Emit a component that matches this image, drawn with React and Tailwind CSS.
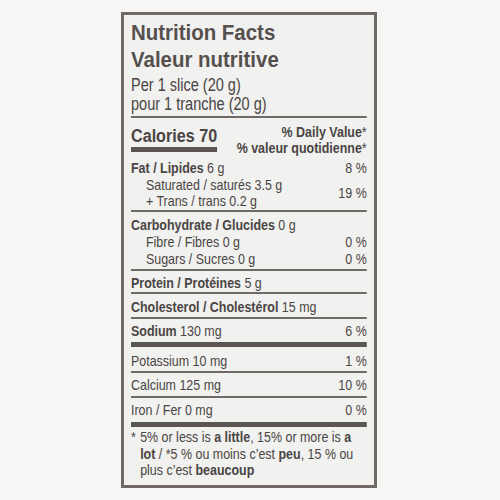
import React from "react";

function Rule({ mt = "mt-[2px]" }) {
  return <div className={`${mt} h-[2px] bg-[#6f6a68]`} />;
}

export default function App() {
  return (
    <div className="w-[500px] h-[500px] bg-[#f6f6f5] pt-[12px] pl-[121px] font-['Liberation_Sans',Arial,sans-serif] text-[#4a4544]">
      <div className="w-[256px] border-[3px] border-[#6f6a68] bg-[#f1f1ef] px-[7px] pb-[6px]">
        <div className="w-[284px] origin-left scale-x-[0.83] whitespace-nowrap">
          <div className="pt-[4px] origin-left scale-x-[1.12] text-[22px] leading-[27px] font-bold text-[#55504e]">
            <div>Nutrition Facts</div>
            <div>Valeur nutritive</div>
          </div>
          <div className="mt-[3px] text-[17.5px] leading-[19px]">
            <div>Per 1 slice (20 g)</div>
            <div>pour 1 tranche (20 g)</div>
          </div>
          <Rule mt="mt-[2px]" />

          <div className="flex justify-between items-start">
            <div className="mt-[7px] flex flex-col origin-left scale-x-[1.08]">
              <div className="text-[18px] leading-[22px] font-bold">Calories 70</div>
              <div className="h-[5px] bg-[#5b5553]" />
            </div>
            <div className="mt-[6px] text-right text-[15px] leading-[16px] font-bold">
              <div>% Daily Value<span className="font-normal">*</span></div>
              <div>% valeur quotidienne<span className="font-normal">*</span></div>
            </div>
          </div>

          <div className="mt-[3px] flex justify-between text-[15px] leading-[17px]">
            <div><span className="font-bold">Fat / Lipides</span> 6 g</div>
            <div>8 %</div>
          </div>
          <div className="mt-[1px] flex justify-between items-center text-[15px] leading-[16px]">
            <div className="pl-[18px]">
              <div>Saturated / saturés 3.5 g</div>
              <div>+ Trans / trans 0.2 g</div>
            </div>
            <div>19 %</div>
          </div>
          <Rule mt="mt-[1px]" />

          <div className="mt-[4px] text-[15px] leading-[17px]">
            <div><span className="font-bold">Carbohydrate / Glucides</span> 0 g</div>
            <div className="flex justify-between pl-[18px]">
              <span>Fibre / Fibres 0 g</span>
              <span>0 %</span>
            </div>
            <div className="flex justify-between pl-[18px]">
              <span>Sugars / Sucres 0 g</span>
              <span>0 %</span>
            </div>
          </div>
          <Rule mt="mt-[2px]" />

          <div className="mt-[3px] text-[15px] leading-[17px]">
            <span className="font-bold">Protein / Protéines</span> 5 g
          </div>
          <Rule mt="mt-[1px]" />

          <div className="mt-[4px] text-[15px] leading-[17px]">
            <span className="font-bold">Cholesterol / Cholestérol</span> 15 mg
          </div>
          <Rule mt="mt-[2px]" />

          <div className="mt-[3px] flex justify-between text-[15px] leading-[17px]">
            <div><span className="font-bold">Sodium</span> 130 mg</div>
            <div>6 %</div>
          </div>
          <div className="mt-[3px] h-[5px] bg-[#5b5553]" />

          <div className="mt-[5px] flex justify-between text-[15px] leading-[17px]">
            <div>Potassium 10 mg</div>
            <div>1 %</div>
          </div>
          <Rule mt="mt-[2px]" />

          <div className="mt-[3px] flex justify-between text-[15px] leading-[17px]">
            <div>Calcium 125 mg</div>
            <div>10 %</div>
          </div>
          <Rule mt="mt-[3px]" />

          <div className="mt-[3px] flex justify-between text-[15px] leading-[17px]">
            <div>Iron / Fer 0 mg</div>
            <div>0 %</div>
          </div>
          <div className="mt-[4px] h-[5px] bg-[#5b5553]" />

          <div className="mt-[2px] pl-[11px] text-[15px] leading-[16.5px]">
            <div className="-ml-[11px]"><span className="inline-block w-[11px]">*</span>5% or less is <span className="font-bold">a little</span>, 15% or more is <span className="font-bold">a</span></div>
            <div><span className="font-bold">lot</span> / *5 % ou moins c’est <span className="font-bold">peu</span>, 15 % ou</div>
            <div>plus c’est <span className="font-bold">beaucoup</span></div>
          </div>
        </div>
      </div>
    </div>
  );
}
